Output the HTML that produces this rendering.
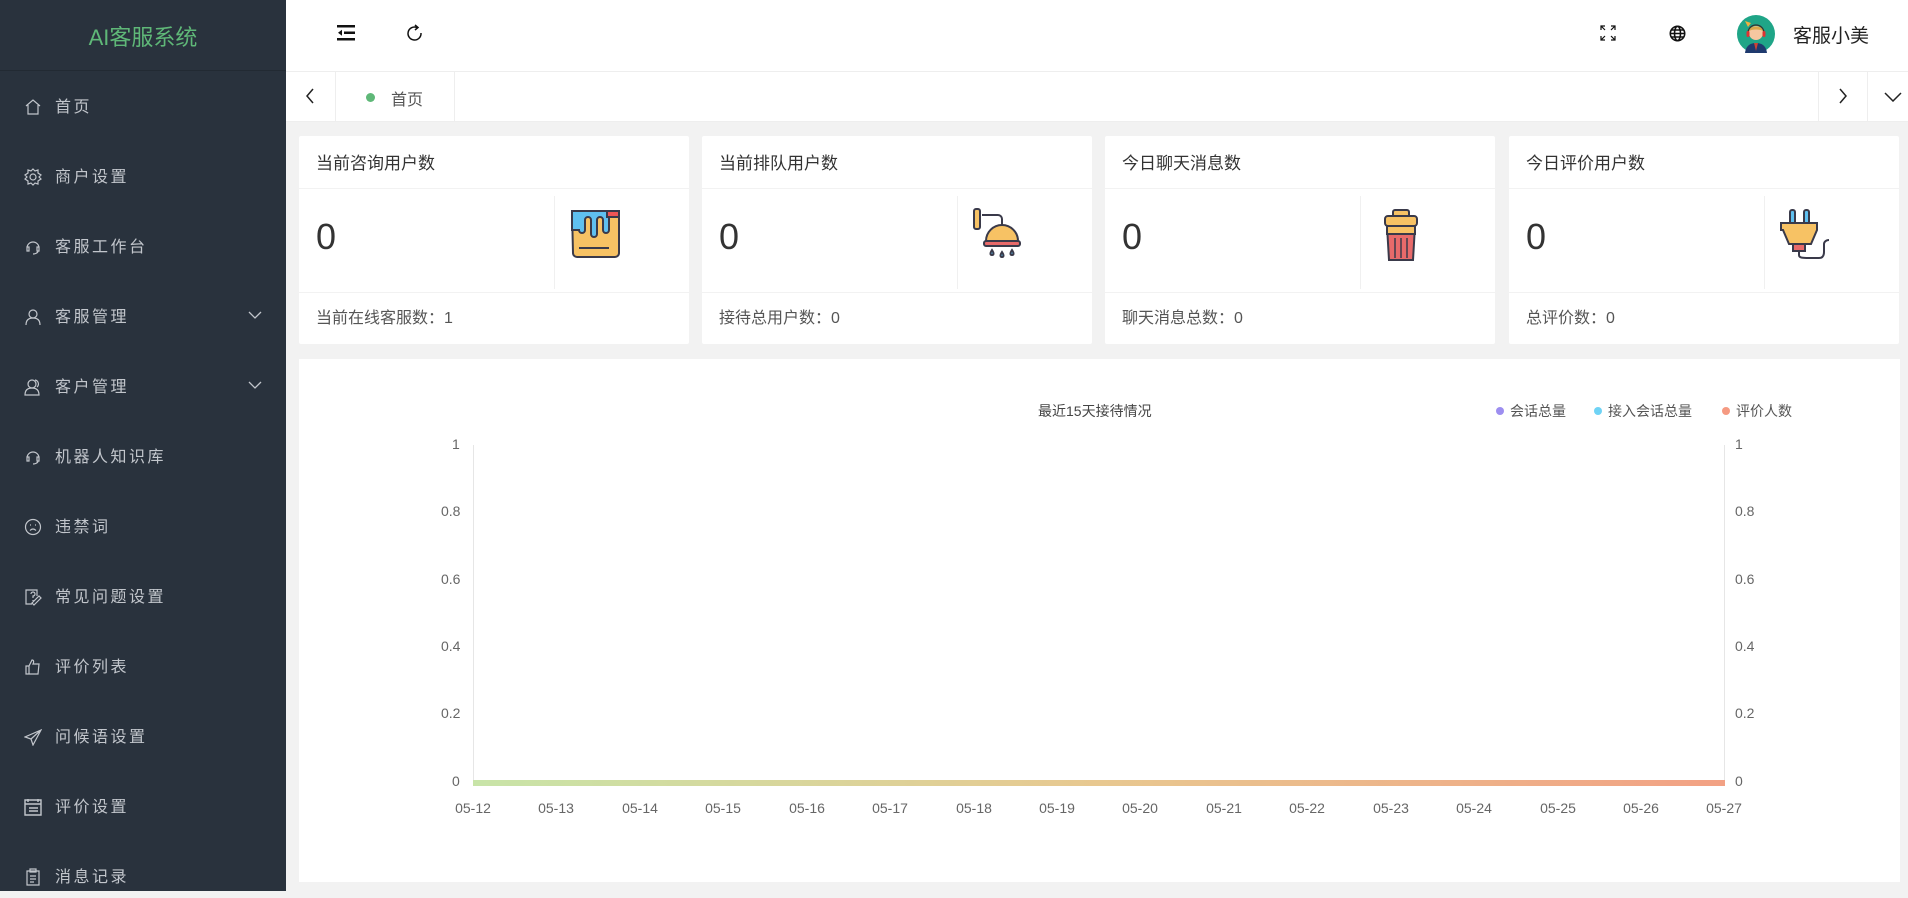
<!DOCTYPE html>
<html><head><meta charset="utf-8"><style>
*{margin:0;padding:0;box-sizing:border-box}
body{width:1908px;height:891px;overflow:hidden;background:#f2f2f2;font-family:"Liberation Sans","Noto Sans CJK SC",sans-serif;position:relative}
.side{position:absolute;left:0;top:0;width:286px;height:891px;background:#29323d}
.logo{height:71px;border-bottom:1px solid #222a33;color:#5fb878;font-size:22px;text-align:center;line-height:76px}
.mi{position:absolute;left:0;width:286px;height:40px;color:#c2c6cc;font-size:16px;letter-spacing:2.5px;line-height:40px}
.mi .t{position:absolute;left:55px;top:2px}
.mi svg{position:absolute;left:24px;top:12px}
.mi .ar{position:absolute;left:248px;top:14px}
.top{position:absolute;left:286px;top:0;right:0;height:72px;background:#fff;border-bottom:1px solid #eee}
.tabs{position:absolute;left:286px;top:72px;right:0;height:50px;background:#fff;border-bottom:1px solid #eee}
.card{position:absolute;top:136px;width:390px;height:208px;background:#fff;border-radius:2px}
.card .h{height:53px;border-bottom:1px solid #f2f2f2;padding-left:17px;line-height:56px;font-size:17px;color:#333}
.card .n{position:absolute;left:17px;top:80px;font-size:36px;color:#333}
.card .dv{position:absolute;left:255px;top:60px;width:1px;height:93px;background:#f0f0f0}
.card .ic{position:absolute;left:270px;top:72px}
.card .f{position:absolute;left:0;right:0;top:156px;border-top:1px solid #f2f2f2;padding-left:17px;line-height:52px;font-size:16px;color:#555}
.chart{position:absolute;left:299px;top:359px;width:1601px;height:523px;background:#fff}
.yl{position:absolute;font-size:14px;color:#666}
.xl{position:absolute;top:800px;font-size:14px;color:#666;width:60px;text-align:center;margin-left:-30px}
</style></head><body>
<div class="side">
<div class="logo">AI客服系统</div>
<div class="mi" style="top:86px"><svg width="18" height="18" viewBox="0 0 18 18" fill="none" stroke="#c2c6cc" stroke-width="1.2"><path d="M2 8L9 2l7 6M4 7v9h10V7"/></svg><span class="t">首页</span></div>
<div class="mi" style="top:156px"><svg width="18" height="18" viewBox="0 0 18 18" fill="none" stroke="#c2c6cc" stroke-width="1.2"><circle cx="9" cy="9" r="3"/><path d="M9 1l2 2 3-1 0 3 3 2-2 2 2 2-3 2 0 3-3-1-2 2-2-2-3 1 0-3-3-2 2-2-2-2 3-2 0-3 3 1z"/></svg><span class="t">商户设置</span></div>
<div class="mi" style="top:226px"><svg width="18" height="18" viewBox="0 0 18 18" fill="none" stroke="#c2c6cc" stroke-width="1.2"><path d="M3 10a6 6 0 0 1 12 0M3 9v4h2V9zM13 9v4h2V9zM14 13c0 2-3 3-5 3"/></svg><span class="t">客服工作台</span></div>
<div class="mi" style="top:296px"><svg width="18" height="18" viewBox="0 0 18 18" fill="none" stroke="#c2c6cc" stroke-width="1.2"><circle cx="9" cy="6" r="4"/><path d="M2 17c0-5 3-7 7-7s7 2 7 7"/></svg><span class="t">客服管理</span><svg class="ar" width="14" height="10" viewBox="0 0 14 10" fill="none" stroke="#c2c6cc" stroke-width="1.3"><path d="M1 2l6 6 6-6"/></svg></div>
<div class="mi" style="top:366px"><svg width="18" height="18" viewBox="0 0 18 18" fill="none" stroke="#c2c6cc" stroke-width="1.2"><circle cx="8" cy="6" r="4"/><path d="M1 17c0-5 3-7 7-7s7 2 7 7zM11 2a4 4 0 0 1 2 7"/></svg><span class="t">客户管理</span><svg class="ar" width="14" height="10" viewBox="0 0 14 10" fill="none" stroke="#c2c6cc" stroke-width="1.3"><path d="M1 2l6 6 6-6"/></svg></div>
<div class="mi" style="top:436px"><svg width="18" height="18" viewBox="0 0 18 18" fill="none" stroke="#c2c6cc" stroke-width="1.2"><path d="M3 10a6 6 0 0 1 12 0M3 9v4h2V9zM13 9v4h2V9zM14 13c0 2-3 3-5 3"/></svg><span class="t">机器人知识库</span></div>
<div class="mi" style="top:506px"><svg width="18" height="18" viewBox="0 0 18 18" fill="none" stroke="#c2c6cc" stroke-width="1.2"><circle cx="9" cy="9" r="7.5"/><path d="M6 12.5c2-2 4-2 6 0M6 7h1M11 7h1"/></svg><span class="t">违禁词</span></div>
<div class="mi" style="top:576px"><svg width="18" height="18" viewBox="0 0 18 18" fill="none" stroke="#c2c6cc" stroke-width="1.2"><path d="M13 8V2H2v14h6M7 6a2 2 0 1 1 2 2v2M9 12v1M10 17l7-7-2-2-7 7z"/></svg><span class="t">常见问题设置</span></div>
<div class="mi" style="top:646px"><svg width="18" height="18" viewBox="0 0 18 18" fill="none" stroke="#c2c6cc" stroke-width="1.2"><path d="M2 8h3v8H2zM5 8l3-6c2 0 2 2 1 4h6l-1 10H5"/></svg><span class="t">评价列表</span></div>
<div class="mi" style="top:716px"><svg width="18" height="18" viewBox="0 0 18 18" fill="none" stroke="#c2c6cc" stroke-width="1.2"><path d="M17 2L1 9l6 2 2 6zM7 11l10-9"/></svg><span class="t">问候语设置</span></div>
<div class="mi" style="top:786px"><svg width="18" height="18" viewBox="0 0 18 18" fill="none" stroke="#c2c6cc" stroke-width="1.4"><path d="M1 2h16v15H1zM1 6h16M5 10h9M5 13h9M4 1v3M14 1v3"/></svg><span class="t">评价设置</span></div>
<div class="mi" style="top:856px"><svg width="18" height="18" viewBox="0 0 18 18" fill="none" stroke="#c2c6cc" stroke-width="1.2"><path d="M3 3h12v14H3zM6 1h6v3H6zM6 8h6M6 11h6M6 14h4"/></svg><span class="t">消息记录</span></div>
</div>

<div class="top">
<svg style="position:absolute;left:51px;top:25px" width="20" height="16" viewBox="0 0 20 16" fill="#111"><rect x="0" y="0" width="18" height="2.5"/><rect x="7" y="6.5" width="11" height="2.5"/><rect x="0" y="13" width="18" height="2.5"/><path d="M1 7.7l4-3v6z"/></svg>
<svg style="position:absolute;left:120px;top:23px" width="18" height="20" viewBox="0 0 18 20" fill="none" stroke="#111" stroke-width="1.5"><path d="M11 4.5A6.5 6.5 0 1 0 15 10"/><path d="M9 2l3 2.5-3 2.5" /></svg>
<svg style="position:absolute;left:1314px;top:25px" width="16" height="16" viewBox="0 0 16 16" fill="none" stroke="#111" stroke-width="1.2"><path d="M1 5V1h4M11 1h4v4M15 11v4h-4M5 15H1v-4M1 1l4 4M15 1l-4 4M15 15l-4-4M1 15l4-4"/></svg>
<svg style="position:absolute;left:1383px;top:25px" width="17" height="17" viewBox="0 0 17 17" fill="none" stroke="#111" stroke-width="1.6"><circle cx="8.5" cy="8.5" r="7.2"/><ellipse cx="8.5" cy="8.5" rx="3" ry="7.2"/><path d="M1.3 8.5h14.4M2.5 5h12M2.5 12h12"/></svg>
<svg style="position:absolute;left:1451px;top:15px" width="38" height="38" viewBox="0 0 38 38"><circle cx="19" cy="19" r="19" fill="#1fa587"/><path d="M8 38c1-8 6-10 11-10s10 2 11 10z" fill="#1e3a6e"/><path d="M17 28h4l-2 8z" fill="#c43"/><circle cx="19" cy="18" r="7" fill="#f5c7a0"/><path d="M12 16c0-6 14-6 14 0c-3-2-11-2-14 0z" fill="#d9a64a"/><path d="M11 18a8 8 0 0 1 16 0" fill="none" stroke="#333" stroke-width="1.3"/><rect x="9.5" y="16" width="3" height="6" rx="1.5" fill="#d33"/><rect x="25.5" y="16" width="3" height="6" rx="1.5" fill="#d33"/><path d="M8 6l6 2-3 4z" fill="#f0b040"/></svg>
<div style="position:absolute;left:1507px;top:21px;font-size:19px;color:#222">客服小美</div>
</div>

<div class="tabs">
<div style="position:absolute;left:0;top:0;width:50px;height:49px;border-right:1px solid #eee"></div>
<svg style="position:absolute;left:19px;top:16px" width="10" height="16" viewBox="0 0 10 16" fill="none" stroke="#222" stroke-width="1.5"><path d="M8 1L2 8l6 7"/></svg>
<div style="position:absolute;left:50px;top:0;width:119px;height:49px;border-right:1px solid #eee"></div>
<div style="position:absolute;left:80px;top:21px;width:9px;height:9px;border-radius:50%;background:#5fb878"></div>
<div style="position:absolute;left:105px;top:14px;font-size:16px;color:#555">首页</div>
<div style="position:absolute;left:1532px;top:0;width:50px;height:49px;border-left:1px solid #eee;border-right:1px solid #eee"></div>
<svg style="position:absolute;left:1552px;top:16px" width="10" height="16" viewBox="0 0 10 16" fill="none" stroke="#222" stroke-width="1.5"><path d="M2 1l6 7-6 7"/></svg>
<svg style="position:absolute;left:1598px;top:20px" width="18" height="10" viewBox="0 0 18 10" fill="none" stroke="#222" stroke-width="1.5"><path d="M1 1l8 8 8-8"/></svg>
</div>

<div class="card" style="left:299px"><div class="h">当前咨询用户数</div><div class="n">0</div><div class="dv"></div>
<svg class="ic" width="52" height="52" viewBox="0 0 52 52" stroke="#3a3a4a" stroke-width="2"><path d="M3 3h47v42a4 4 0 0 1-4 4H8a4 4 0 0 1-4-4z" fill="#f7c264"/><path d="M3 3h47v5H40v14a3 3 0 0 1-6 0v-10a3 3 0 0 0-6 0v14a3 3 0 0 1-6 0V12a3 3 0 0 0-6 0v10a3 3 0 0 1-6 0V22H3z" fill="#5fc0f0"/><rect x="38" y="3" width="12" height="6" fill="#e55"/><path d="M10 40h30" stroke-width="2"/></svg>
<div class="f">当前在线客服数：1</div></div>

<div class="card" style="left:702px"><div class="h">当前排队用户数</div><div class="n">0</div><div class="dv"></div>
<svg class="ic" width="60" height="56" viewBox="0 0 60 56" stroke="#3a3a4a" stroke-width="2"><rect x="2" y="1" width="6" height="20" rx="2" fill="#f7c264"/><path d="M10 7h16a4 4 0 0 1 4 4v6" fill="none"/><path d="M14 33a16 16 0 0 1 32 0z" fill="#f7c264"/><rect x="12" y="33" width="36" height="5" rx="2" fill="#e86a6a"/><path d="M20 42c-2 3-2 5 0 5s2-2 0-5zM30 44c-2 3-2 5 0 5s2-2 0-5zM40 42c-2 3-2 5 0 5s2-2 0-5z" fill="#5fc0f0"/></svg>
<div class="f">接待总用户数：0</div></div>

<div class="card" style="left:1105px"><div class="h">今日聊天消息数</div><div class="n">0</div><div class="dv"></div>
<svg class="ic" width="52" height="56" viewBox="0 0 52 56" stroke="#3a3a4a" stroke-width="2"><rect x="18" y="2" width="16" height="7" rx="2" fill="#f7c264"/><rect x="10" y="8" width="32" height="10" rx="3" fill="#f7c264"/><path d="M12 18h28l-2 34H14z" fill="#e86a6a"/><path d="M12 18h28v8H12z" fill="#f7c264"/><path d="M20 30v20M26 30v20M32 30v20" stroke-width="1.5"/></svg>
<div class="f">聊天消息总数：0</div></div>

<div class="card" style="left:1509px"><div class="h">今日评价用户数</div><div class="n">0</div><div class="dv"></div>
<svg class="ic" width="60" height="56" viewBox="0 0 60 56" stroke="#3a3a4a" stroke-width="2"><rect x="11" y="2" width="5" height="14" rx="2" fill="#5fc0f0"/><rect x="25" y="2" width="5" height="14" rx="2" fill="#5fc0f0"/><path d="M2 15h36v7l-6 14H10L4 22H2z" fill="#f7c264"/><rect x="14" y="36" width="12" height="7" fill="#e86a6a"/><path d="M20 43v4c0 3 4 3 10 3h10c4 0 5-3 5-6v-8c0-2 2-4 5-4" fill="none"/></svg>
<div class="f">总评价数：0</div></div>

<div class="chart"></div>
<div style="position:absolute;left:1038px;top:401px;font-size:14px;color:#444">最近15天接待情况</div>
<div style="position:absolute;left:1496px;top:407px;width:8px;height:8px;border-radius:50%;background:#9d8ef0"></div>
<div style="position:absolute;left:1510px;top:401px;font-size:14px;color:#555">会话总量</div>
<div style="position:absolute;left:1594px;top:407px;width:8px;height:8px;border-radius:50%;background:#6fd3f5"></div>
<div style="position:absolute;left:1608px;top:401px;font-size:14px;color:#555">接入会话总量</div>
<div style="position:absolute;left:1722px;top:407px;width:8px;height:8px;border-radius:50%;background:#f59a82"></div>
<div style="position:absolute;left:1736px;top:401px;font-size:14px;color:#555">评价人数</div>
<div style="position:absolute;left:473px;top:445px;width:1px;height:337px;background:#e6e6e6"></div>
<div style="position:absolute;left:1724px;top:445px;width:1px;height:337px;background:#e6e6e6"></div>
<div style="position:absolute;left:473px;top:780px;width:1252px;height:6px;background:linear-gradient(90deg,#c8e4a8,#e8c890 50%,#f2a184)"></div>
<div class="yl" style="top:436px;left:452px">1</div><div class="yl" style="top:503px;left:441px">0.8</div><div class="yl" style="top:571px;left:441px">0.6</div><div class="yl" style="top:638px;left:441px">0.4</div><div class="yl" style="top:705px;left:441px">0.2</div><div class="yl" style="top:773px;left:452px">0</div>
<div class="yl" style="top:436px;left:1735px">1</div><div class="yl" style="top:503px;left:1735px">0.8</div><div class="yl" style="top:571px;left:1735px">0.6</div><div class="yl" style="top:638px;left:1735px">0.4</div><div class="yl" style="top:705px;left:1735px">0.2</div><div class="yl" style="top:773px;left:1735px">0</div>
<div class="xl" style="left:473px">05-12</div><div class="xl" style="left:556px">05-13</div><div class="xl" style="left:640px">05-14</div><div class="xl" style="left:723px">05-15</div><div class="xl" style="left:807px">05-16</div><div class="xl" style="left:890px">05-17</div><div class="xl" style="left:974px">05-18</div><div class="xl" style="left:1057px">05-19</div><div class="xl" style="left:1140px">05-20</div><div class="xl" style="left:1224px">05-21</div><div class="xl" style="left:1307px">05-22</div><div class="xl" style="left:1391px">05-23</div><div class="xl" style="left:1474px">05-24</div><div class="xl" style="left:1558px">05-25</div><div class="xl" style="left:1641px">05-26</div><div class="xl" style="left:1724px">05-27</div>
</body></html>
